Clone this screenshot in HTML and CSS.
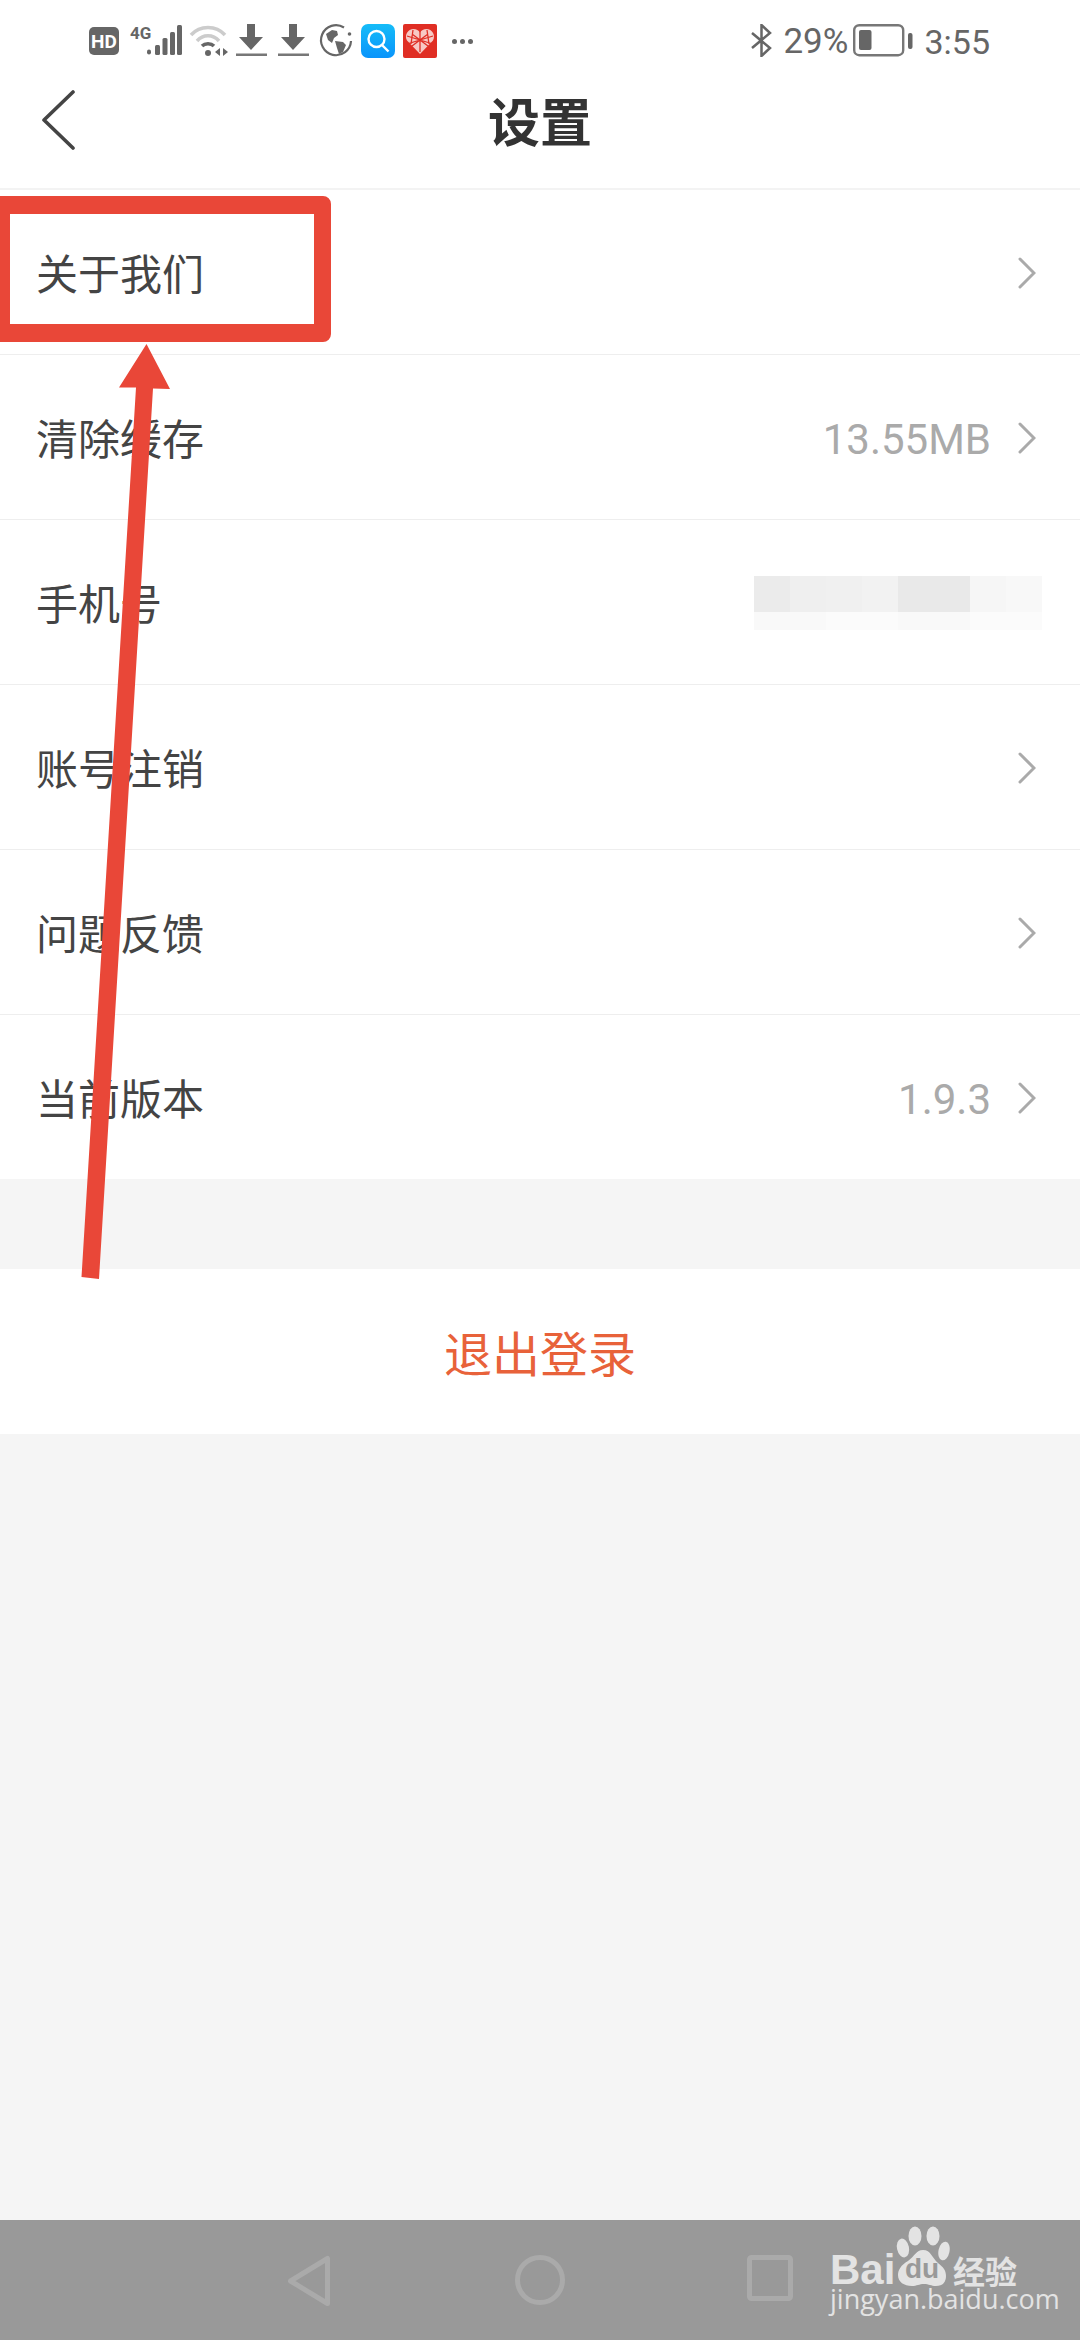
FILE: index.html
```html
<!DOCTYPE html>
<html lang="zh-CN">
<head>
<meta charset="utf-8">
<title>设置</title>
<link rel="stylesheet" href="styles.css">
</head>
<body>
<div class="page">
  <header class="top">
    <div class="status">
      <div class="status-left">
        <svg class="ic" width="30" height="28" viewBox="0 0 30 28"><rect width="30" height="28" rx="5" fill="#666"/><text x="15" y="21" text-anchor="middle" class="hd">HD</text></svg>
        <svg class="ic sig" width="50" height="32" viewBox="0 0 50 32"><text x="0" y="14" class="g4">4G</text><rect x="0" y="24.500" width="4" height="5" rx="2" fill="#666"/><rect x="8" y="20" width="5" height="10" rx="1.500" fill="#666"/><rect x="15.500" y="13" width="5" height="17" rx="1.500" fill="#666"/><rect x="23" y="7" width="5" height="23" rx="1.500" fill="#666"/><rect x="30" y="0" width="5" height="30" rx="1.500" fill="#666"/></svg>
        <svg class="ic wifi" width="38" height="32" viewBox="0 0 38 32"><path d="M1 11C10 1 26 1 35 11" fill="none" stroke="#ccc" stroke-width="3.500"/><path d="M7 17C13 10 23 10 29 17" fill="none" stroke="#ccc" stroke-width="3.500"/><path d="M12 22C15 19 21 19 24 22" fill="none" stroke="#666" stroke-width="3.500"/><circle cx="18" cy="29" r="3" fill="#666"/><path d="M30 24v8l-5-4zM33 24v8l5-4z" fill="#666"/></svg>
        <svg class="ic dl" width="31" height="32" viewBox="0 0 31 32"><path d="M11 0h8v13h8L15 26 3 13h8z" fill="#666"/><rect x="0" y="29.500" width="31" height="2.500" fill="#777"/></svg>
        <svg class="ic dl2" width="31" height="32" viewBox="0 0 31 32"><path d="M11 0h8v13h8L15 26 3 13h8z" fill="#666"/><rect x="0" y="29.500" width="31" height="2.500" fill="#777"/></svg>
        <svg class="ic globe" width="33" height="33" viewBox="0 0 33 33"><path d="M24 3.500A15 15 0 1 0 31 17" fill="none" stroke="#666" stroke-width="2.200"/><circle cx="29.500" cy="10" r="1.800" fill="#666"/><path d="M6 10l6-4 5 1 1 4-4 3-2 5-4-3zM15 17l8 1 3 3-3 7-4 2-2-6z" fill="#666"/></svg>
        <svg class="ic app1" width="34" height="34" viewBox="0 0 34 34"><defs><linearGradient id="blue" x1="0" y1="0" x2="0" y2="1"><stop offset="0" stop-color="#15bcf8"/><stop offset="1" stop-color="#0a94fb"/></linearGradient></defs><rect width="34" height="34" rx="7" fill="url(#blue)"/><circle cx="15.500" cy="15" r="8" fill="none" stroke="#fff" stroke-width="2.400"/><path d="M21 21l6.500 6.500" stroke="#fff" stroke-width="2.400"/></svg>
        <svg class="ic app2" width="34" height="34" viewBox="0 0 34 34"><rect width="34" height="34" rx="2" fill="#e02e24"/><path d="M17 30L4 16.500C1 11 5 5 10.500 5 13.500 5 15.500 6.500 17 8.500 18.500 6.500 20.500 5 23.500 5 29 5 33 11 30 16.500z" fill="#f7c9c5"/><path d="M4 12l26 8M30 12L4 20M17 6v22M10 6l-2 14M24 6l2 14M9 22l16-12M25 22L9 10" stroke="#e02e24" stroke-width="1.300"/></svg>
        <span class="more"><i></i><i></i><i></i></span>
      </div>
      <div class="status-right">
        <svg width="22" height="33" viewBox="0 0 22 33"><path d="M1 9l18 15-8.500 8V1L19 9 1 24" fill="none" stroke="#666" stroke-width="2.500"/></svg>
        <span class="pct">29%</span>
        <svg class="batt" width="60" height="33" viewBox="0 0 60 33"><rect x="1.200" y="1.200" width="49" height="30" rx="5" fill="none" stroke="#777" stroke-width="2.400"/><rect x="6" y="6" width="12.500" height="20" rx="2" fill="#666"/><rect x="55" y="9" width="4.500" height="16" rx="2" fill="#666"/></svg>
        <span class="time">3:55</span>
      </div>
    </div>
    <div class="titlebar">
      <svg class="back" width="34" height="60" viewBox="0 0 34 60"><path d="M31 2L2 30l29 28" fill="none" stroke="#444" stroke-width="3.600" stroke-linecap="round" stroke-linejoin="round"/></svg>
      <h1 class="title">设置</h1>
      <span></span>
    </div>
  </header>

  <section class="list">
    <div class="row"><span class="label">关于我们</span><span class="right"><svg class="chev" width="18" height="32" viewBox="0 0 18 32"><path d="M2 2l14 14L2 30" fill="none" stroke="#aaa" stroke-width="3" stroke-linecap="round"/></svg></span></div>
    <div class="row"><span class="label">清除缓存</span><span class="right"><span class="val">13.55MB</span><svg class="chev" width="18" height="32" viewBox="0 0 18 32"><path d="M2 2l14 14L2 30" fill="none" stroke="#aaa" stroke-width="3" stroke-linecap="round"/></svg></span></div>
    <div class="row row-phone"><span class="label">手机号</span>
      <div class="mosaic">
        <i class="m1"></i><i class="m2"></i><i class="m3"></i><i class="m4"></i><i class="m5"></i><i class="m5"></i><i class="m6"></i><i class="m7"></i>
        <i class="m8"></i><i class="m8"></i><i class="m9"></i><i class="m9"></i><i class="m8"></i><i class="m8"></i><i class="m9"></i><i class="m9"></i>
      </div>
    </div>
    <div class="row"><span class="label">账号注销</span><span class="right"><svg class="chev" width="18" height="32" viewBox="0 0 18 32"><path d="M2 2l14 14L2 30" fill="none" stroke="#aaa" stroke-width="3" stroke-linecap="round"/></svg></span></div>
    <div class="row"><span class="label">问题反馈</span><span class="right"><svg class="chev" width="18" height="32" viewBox="0 0 18 32"><path d="M2 2l14 14L2 30" fill="none" stroke="#aaa" stroke-width="3" stroke-linecap="round"/></svg></span></div>
    <div class="row row-last"><span class="label">当前版本</span><span class="right"><span class="val">1.9.3</span><svg class="chev" width="18" height="32" viewBox="0 0 18 32"><path d="M2 2l14 14L2 30" fill="none" stroke="#aaa" stroke-width="3" stroke-linecap="round"/></svg></span></div>
  </section>

  <button class="logout" type="button">退出登录</button>

  <div class="spacer"></div>

  <nav class="nav">
    <svg width="44" height="52" viewBox="0 0 44 52"><path d="M39.500 3.500V48.500L2.500 26z" fill="none" stroke="#aaa" stroke-width="5" stroke-linejoin="round"/></svg>
    <svg width="50" height="50" viewBox="0 0 50 50"><circle cx="25" cy="25" r="22.500" fill="none" stroke="#aaa" stroke-width="5"/></svg>
    <svg width="46" height="46" viewBox="0 0 46 46"><rect x="2.500" y="2.500" width="41" height="41" rx="2" fill="none" stroke="#aaa" stroke-width="5"/></svg>
  </nav>
</div>

<svg class="marks" width="1080" height="2340" viewBox="0 0 1080 2340">
  <path fill-rule="evenodd" fill="#e94738" d="M0 196H323a8 8 0 0 1 8 8V334a8 8 0 0 1-8 8H0ZM10 214V324H314V214Z"/>
  <path fill="#e94738" d="M146.500 344L170 389 153 388.500 99 1279 81.500 1277 136 387.500 119 387.500Z"/>
</svg>

<div class="wm">
  <div class="wm-top">
    <span class="wm-bai">Bai</span>
    <svg class="wm-paw" width="56" height="62" viewBox="4 0 56 62"><ellipse cx="25" cy="11" rx="6.500" ry="9.500" fill="#e3e3e3"/><ellipse cx="43" cy="11" rx="6.500" ry="9.500" fill="#e3e3e3"/><ellipse cx="13" cy="23" rx="6" ry="9.500" fill="#e3e3e3" transform="rotate(-12 13 23)"/><ellipse cx="54" cy="26" rx="5.500" ry="9.500" fill="#e3e3e3" transform="rotate(12 54 26)"/><path d="M33 25C26 25 25 31 18 36 11 40 8 45 8 50c0 7 6 11 14 11 5 0 7-2 12-2s7 2 12 2c7 0 10-4 10-10 0-6-3-9-8-13-6-5-7-13-15-13z" fill="#e3e3e3"/><text x="32" y="53" text-anchor="middle" class="wm-du">du</text></svg>
    <span class="wm-cn">经验</span>
  </div>
  <div class="wm-url">jingyan.baidu.com</div>
</div>
</body>
</html>
```
FILE: styles.css
```css
* { box-sizing: border-box; }
html, body { margin: 0; padding: 0; }
body { width: 1080px; height: 2340px; overflow: hidden; background: #f5f5f5; font-family: "Noto Sans CJK SC", "Noto Sans", sans-serif; position: relative; }
.page { display: flex; flex-direction: column; height: 2340px; }

.top { height: 190px; background: #fff; border-bottom: 2px solid #f3f3f3; }
.status { height: 60px; padding: 24px 0 0 89px; display: flex; justify-content: space-between; align-items: flex-start; }
.status-left { display: flex; align-items: flex-start; }
.status-right { display: flex; align-items: flex-start; padding-right: 90px; color: #666; font-family: Roboto, sans-serif; font-size: 35px; line-height: 36px; }
.status-left .ic { display: block; flex: none; overflow: visible; }
.hd { font: 700 19px Roboto, sans-serif; fill: #fff; }
.g4 { font: 700 17px "Roboto", sans-serif; fill: #666; }
.sig { margin: 1px 0 0 11px; }
.sig rect { transform: translateX(17px); }
.status-left .ic:first-child { margin-top: 3px; }
.wifi { margin-left: 10px; }
.dl { margin-left: 8px; }
.dl2 { margin-left: 11px; }
.globe { margin-left: 11px; }
.app1 { margin-left: 8px; }
.app2 { margin-left: 8px; }
.more { display: flex; gap: 3px; margin: 15px 0 0 15px; }
.more i { width: 5px; height: 5px; border-radius: 50%; background: #666; }
.pct { margin-left: 10px; }
.batt { margin-left: 5px; }
.time { margin-left: 11px; font-size: 34px; }

.titlebar { height: 128px; padding: 0 42px 8px; display: grid; grid-template-columns: 1fr auto 1fr; align-items: center; }
.back { display: block; }
.title { margin: 0; font-size: 52px; line-height: 60px; font-weight: 700; color: #333; }

.list { background: #fff; }
.row { height: 165px; padding: 0 44px 0 36px; display: flex; justify-content: space-between; align-items: center; border-bottom: 1px solid #eee; }
.row-last { border-bottom: 0; height: 164px; }
.label { font-size: 42px; line-height: 60px; color: #444; }
.right { display: flex; align-items: center; gap: 27px; }
.val { font: 400 42px/60px Roboto, sans-serif; color: #aaa; margin-top: 6px; }
.chev { display: block; margin-top: 2px; }
.row-phone { padding-right: 38px; }
.mosaic { display: grid; grid-template-columns: repeat(8, 36px); grid-template-rows: 36px 18px; margin-top: 2px; }
.mosaic i { display: block; }
.m1 { background: #ebebeb; }
.m2 { background: #efefef; }
.m3 { background: #f0f0f0; }
.m4 { background: #f2f2f2; }
.m5 { background: #e9e9e9; }
.m6 { background: #f6f6f6; }
.m7 { background: #f8f8f8; }
.m8 { background: #f9f9f9; }
.m9 { background: #fbfbfb; }

.logout { margin: 90px 0 0; height: 165px; width: 100%; border: 0; padding: 0 0 2px; background: #fff; color: #e8623a; font: 400 48px/60px "Noto Sans CJK SC", sans-serif; }
.spacer { flex: 1; }

.nav { height: 120px; background: #999; display: flex; padding: 35px 287px 0 288px; justify-content: space-between; align-items: flex-start; }

.marks { position: absolute; left: 0; top: 0; pointer-events: none; }

.wm { position: absolute; left: 830px; top: 2225px; width: 195px; color: #e3e3e3; }
.wm-top { display: flex; align-items: flex-start; height: 62px; }
.wm-bai { font: 700 42px/30px "Liberation Sans", sans-serif; width: 64px; flex: none; margin-top: 30px; }
.wm-paw { display: block; flex: none; }
.wm-du { font: 700 28px "Liberation Sans", sans-serif; fill: #999; }
.wm-cn { font-size: 32px; line-height: 30px; font-weight: 700; margin: 30px 0 0 3px; white-space: nowrap; }
.wm-url { font: 400 27px/24px "Open Sans", sans-serif; white-space: nowrap; }
```
